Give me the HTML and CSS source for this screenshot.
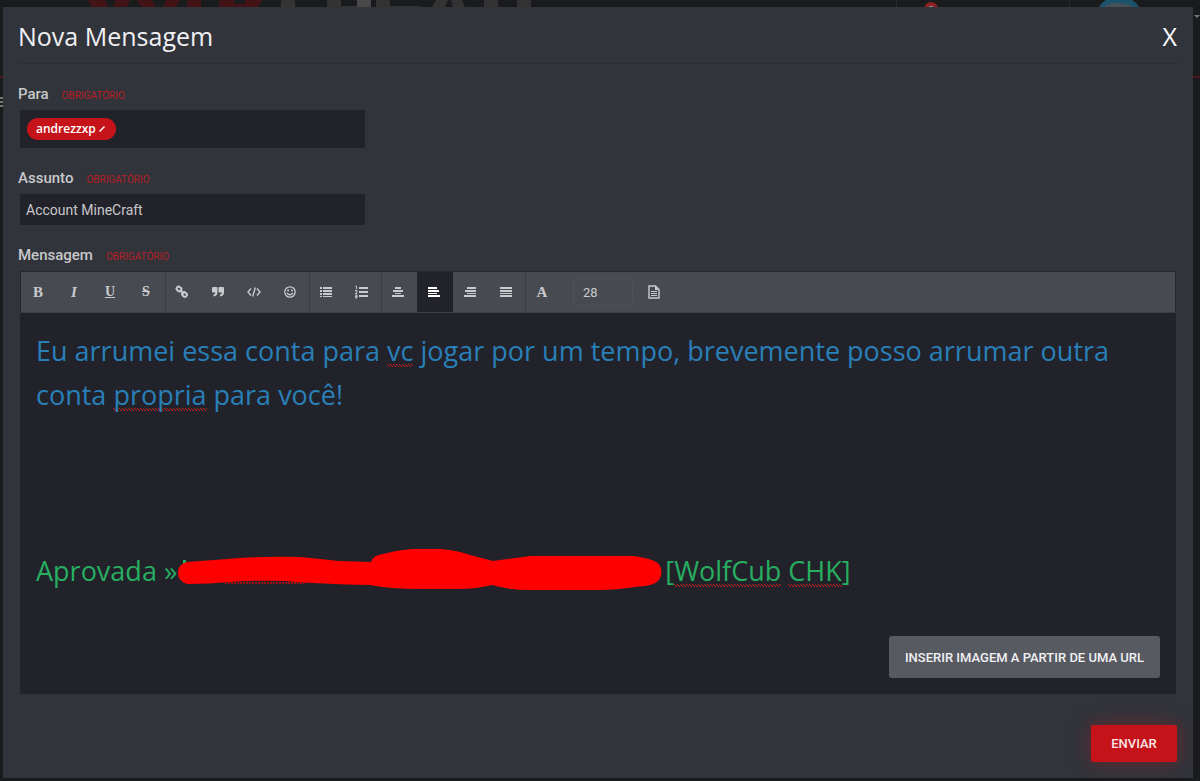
FILE: index.html
```html
<!DOCTYPE html>
<html lang="pt-BR">
<head>
<meta charset="utf-8">
<title>Nova Mensagem</title>
<link rel="stylesheet" href="styles.css">
</head>
<body>
<svg class="backdrop" width="1200" height="120" aria-hidden="true">
  <g fill="#431417"><path d="M88 0h17l3 7H92zM116 0h14l-3 7h-14zM137 0h15l3 7h-14zM166 0h14l-4 7h-13zM187 0h14v7h-14zM219 0h15v7h-15zM234 4h11v3h-11zM245 0h17l-4 7h-13z"/></g>
  <g fill="#333"><path d="M281 0h14v7h-14zM327 0h14v7h-14zM341 6h16v1h-16zM376 0h14v7h-14zM390 6h29v1h-29zM436 0h12l-3 7h-13zM451 0h11l3 7h-12zM484 0h14v7h-14zM517 0h14v7h-14z"/></g>
  <path fill="#484848" d="M357 0h14v7h-14z"/>
  <circle cx="931" cy="9" r="7" fill="#8c2024"/><path fill="#888" d="M929 6h4v1h-4z"/>
  <circle cx="1119" cy="20" r="24" fill="#1c536b"/><ellipse cx="1118" cy="9" rx="15" ry="6" fill="#465257"/>
  <path fill="#292a2c" d="M896 0h1v7h-1zM1069 0h1v7h-1z"/>
  <path fill="#4b171c" d="M0 76h3v2H0zM1193 76h7v2h-7z"/>
  <path fill="#777" d="M0 97h3v2H0zM0 101h3v2H0zM0 105h3v2H0zM1194 15h6l-3 3z"/>
</svg>
<main class="dialog">
  <header class="dialog-header">
    <h1>Nova Mensagem</h1>
    <button class="close" type="button" aria-label="Fechar">X</button>
  </header>
  <form>
    <div class="field">
      <div class="field-head"><label for="to">Para</label><span class="required">Obrigatório</span></div>
      <div class="recipients">
        <span class="token">andrezzxp <button type="button" aria-label="Remover andrezzxp"><svg width="6" height="6" viewBox="0 0 6 6"><path d="M.5 5.5l5-5" stroke="#fff" stroke-width="1.4"/></svg></button></span>
        <input id="to" type="text">
      </div>
    </div>
    <div class="field">
      <div class="field-head"><label for="subject">Assunto</label><span class="required">Obrigatório</span></div>
      <input class="subject" id="subject" type="text" value="Account MineCraft">
    </div>
    <div class="field">
      <div class="field-head"><span class="label" id="message-label">Mensagem</span><span class="required">Obrigatório</span></div>
      <div class="editor">
        <div class="toolbar" role="toolbar" aria-label="Formatação">
          <div class="group">
            <button type="button" class="bold">B</button>
            <button type="button" class="italic">I</button>
            <button type="button" class="under">U</button>
            <button type="button" class="strike">S</button>
          </div>
          <div class="group">
            <button type="button" aria-label="Link"><svg viewBox="0 0 14 14"><g fill="none" stroke="currentColor" stroke-width="2"><rect x="1.5" y="2" width="5" height="4" rx="2" transform="rotate(42 4 4)"/><rect x="7" y="7.5" width="5" height="4" rx="2" transform="rotate(42 9.5 9.5)"/><path d="M5 5l4 4"/></g></svg></button>
            <button type="button" aria-label="Citação"><svg viewBox="0 0 14 14"><path d="M2 2h3.500Q6.500 2 6.500 3v4.500Q6.500 11 2.500 11.500V9.500Q4.500 9 4.500 7.500H2Q1 7.500 1 6.500V3Q1 2 2 2zM8.500 2H12Q13 2 13 3v4.500Q13 11 9 11.500V9.500Q11 9 11 7.500H8.500Q7.500 7.500 7.500 6.500V3Q7.500 2 8.500 2z"/></svg></button>
            <button type="button" aria-label="Código"><svg viewBox="0 0 14 14"><path d="M4 3.500L1 7l3 3.500M10 3.500L13 7l-3 3.500M8.300 2.500l-2.600 9" fill="none" stroke="currentColor" stroke-width="1.400"/></svg></button>
            <button type="button" aria-label="Emoticon"><svg viewBox="0 0 14 14"><circle cx="7" cy="7" r="5.200" fill="none" stroke="currentColor" stroke-width="1.300"/><path d="M4.300 4.500h1.700v1.700H4.300zM8 4.500h1.700v1.700H8z"/><path d="M4 8q3 3.500 6 0" fill="none" stroke="currentColor" stroke-width="1.300"/></svg></button>
          </div>
          <div class="group">
            <button type="button" aria-label="Lista"><svg viewBox="0 0 14 14"><path d="M1 2h2v2H1zM1 5h2v2H1zM1 8h2v2H1zM1 11h2v1H1zM4 2h9v2H4zM4 5h9v2H4zM4 8h9v2H4zM4 11h9v1H4z"/></svg></button>
            <button type="button" aria-label="Lista numerada"><svg viewBox="0 0 14 14"><path d="M4 2h9v2H4zM4 6h9v2H4zM4 10h9v2H4z"/><path d="M.5 1h1v3M0 5.500h2v1.500L.5 8.500H2M0 10h2v3H0M0 11.500h2" fill="none" stroke="currentColor"/></svg></button>
          </div>
          <div class="group">
            <button type="button" aria-label="Centralizar"><svg viewBox="0 0 14 14"><path d="M4 2h6v2H4zM2 5h10v2H2zM4 8h6v1H4zM1 10h12v2H1z"/></svg></button>
            <button type="button" class="active" aria-label="Alinhar à esquerda" aria-pressed="true"><svg viewBox="0 0 14 14"><path d="M1 2h9v2H1zM1 5h11v2H1zM1 8h9v1H1zM1 10h12v2H1z"/></svg></button>
            <button type="button" aria-label="Alinhar à direita"><svg viewBox="0 0 14 14"><path d="M4 2h9v2H4zM2 5h11v2H2zM4 8h9v1H4zM1 10h12v2H1z"/></svg></button>
            <button type="button" aria-label="Justificar"><svg viewBox="0 0 14 14"><path d="M1 2h12v2H1zM1 5h12v2H1zM1 8h12v1H1zM1 10h12v2H1z"/></svg></button>
          </div>
          <div class="group last">
            <button type="button" class="bold" aria-label="Cor do texto">A</button>
            <input class="size" type="text" value="28" aria-label="Tamanho">
            <button type="button" aria-label="Visualizar"><svg viewBox="0 0 14 14"><path d="M2 1h6.500L12 4.500V13H2z" fill="none" stroke="currentColor" stroke-width="1.400"/><path d="M8 1v4h4M4 6h6v1H4zM4 8h6v1H4zM4 10h6v1H4z"/></svg></button>
          </div>
        </div>
        <div class="content" contenteditable="true" spellcheck="false" role="textbox" aria-multiline="true" aria-labelledby="message-label">
          <p class="blue">Eu arrumei essa conta para <span class="typo">vc</span> jogar por um tempo, brevemente posso arrumar outra conta <span class="typo">propria</span> para você!</p>
          <p><br></p>
          <p><br></p>
          <p><br></p>
          <p class="green">Aprovada »<svg class="scribble" width="488" height="44" viewBox="177 550 488 44"><path d="M183 561h3v5h-3z" fill="#27ae60"/><path d="M178 574Q178 565 187 563Q215 561 240 559Q270 557 300 558Q322 560 338 562L371 563Q373 556 383 555Q405 549 430 549.500Q455 550 470 556L493 562Q515 559 530 557H633Q657 560 660 567Q664 576 657 583Q652 587 635 588Q615 591 600 591H530Q510 591 492 586Q475 590 460 590H420Q390 590 370 586Q320 585 285 582Q250 581 230 583Q210 585 188 585Q178 583 178 574z" fill="red"/><path d="M225 584h80" stroke="#a10d12" stroke-width="2" stroke-dasharray="2 1"/></svg>[<span class="typo">WolfCub</span> <span class="typo">CHK</span>]</p>
        </div>
        <div class="editor-footer"><button type="button" class="insert">Inserir imagem a partir de uma URL</button></div>
      </div>
    </div>
    <footer class="actions"><button class="send" type="submit">Enviar</button></footer>
  </form>
</main>
</body>
</html>
```
FILE: styles.css
```css
* { box-sizing: border-box; }
body { margin: 0; padding: 7px 7px 3px 3px; background: #1a1b1d; color: #c8c8ca; font-family: Roboto, sans-serif; font-size: 14px; }
button, input { font: inherit; color: inherit; border: 0; padding: 0; margin: 0; background: none; outline: 0; }
button { cursor: pointer; }
.backdrop { position: absolute; top: 0; left: 0; width: 1200px; }
.dialog { position: relative; padding: 0 16px 16px 15px; background: #31343b; }
.dialog-header { display: flex; justify-content: space-between; align-items: center; height: 57px; padding-top: 2px; border-bottom: 1px solid #2b2e34; color: #f0f0f2; }
h1 { margin: 0; font: 400 25px/40px "Open Sans", sans-serif; }
.close { font: 400 25px/40px "Open Sans", sans-serif; color: #fff; }
form { padding-top: 20px; }
.field { margin-bottom: 20px; }
.field-head { display: flex; align-items: center; gap: 13px; height: 20px; margin-bottom: 6px; }
.field-head label, .label { font-size: 15px; font-weight: 500; line-height: 18px; }
.required { padding-top: 2px; font-size: 10px; text-transform: uppercase; color: #b51e25; }
.recipients { display: flex; align-items: center; gap: 6px; width: 345px; height: 38px; margin-left: 2px; padding: 0 7px; background: #22222b; }
.recipients input { flex: 1; min-width: 0; }
.token { display: flex; align-items: center; gap: 3px; height: 22px; padding: 0 11px 0 9px; border-radius: 11px; background: #c6131a; color: #fff; font: 600 12px/22px "Open Sans", sans-serif; }
.token button { display: flex; }
.subject { display: block; width: 345px; height: 31px; margin-left: 2px; padding: 0 6px; background: #22222b; }
.editor { margin: 0 1px 0 2px; background: #22222b; }
.toolbar { display: flex; height: 42px; border: 1px solid #25262e; border-bottom-color: #3b3d44; background: #484a51; color: #c9cace; }
.group { display: flex; }
.group:not(.last) { box-shadow: 1px 0 #3d3f45; }
.toolbar button { display: flex; align-items: center; justify-content: center; width: 36px; padding-right: 2px; font: 14px "Liberation Serif", serif; }
.toolbar svg { width: 14px; height: 14px; fill: currentColor; }
.toolbar .bold { font-weight: 700; font-size: 15px; }
.toolbar .italic { font-weight: 700; font-style: italic; font-size: 15px; }
.toolbar .under { font-weight: 700; text-decoration: underline; }
.toolbar .strike { font-weight: 700; text-decoration: line-through; }
.toolbar .active { background: #22222b; color: #fff; }
.size { align-self: center; width: 60px; height: 28px; margin: 0 4px 0 12px; padding: 0 9px; border: 1px solid #4e5057; border-radius: 3px; font-size: 13px; }
.content { padding: 16px 16px 43px; outline: 0; font: 400 27px/44px "Open Sans", "Noto Sans", sans-serif; }
.content p { margin: 0; }
.blue { color: #2980b9; }
.green { color: #27ae60; }
.typo { background: linear-gradient(45deg, transparent 35%, #d31920 35% 65%, transparent 65%) 0 32px / 3px 3px repeat-x; }
.scribble { vertical-align: top; }
.editor-footer { display: flex; justify-content: flex-end; padding: 0 16px 16px; }
.insert { height: 42px; padding: 0 16px; border-radius: 3px; background: #585a62; color: #f0f0f2; font-size: 13px; font-weight: 500; text-transform: uppercase; }
.actions { display: flex; justify-content: flex-end; padding-top: 11px; }
.send { width: 86px; height: 37px; border-radius: 2px; background: #c6131a; color: #f5e5e6; font-size: 13px; font-weight: 500; text-transform: uppercase; box-shadow: 0 0 20px #c6131a66; }
```
